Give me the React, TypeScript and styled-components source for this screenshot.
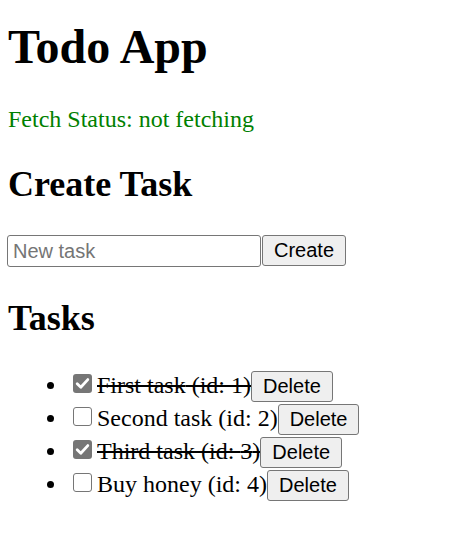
import React, { useState } from "react";
import styled, { createGlobalStyle } from "styled-components";

const GlobalStyle = createGlobalStyle`
  html, body {
    margin: 0;
    padding: 0;
    background: #ffffff;
  }
  body {
    font-family: "Liberation Serif", "Times New Roman", serif;
    font-size: 24px;
    color: #000000;
  }
`;

const Page = styled.div`
  padding: 0 8px;
`;

const Title = styled.h1`
  font-size: 48px;
  font-weight: bold;
  margin: 19px 0 32px;
  line-height: normal;
`;

const Status = styled.p<{ $fetching: boolean }>`
  margin: 24px 0;
  font-size: 24px;
  color: ${(p) => (p.$fetching ? "#b8860b" : "#008000")};
`;

const SectionTitle = styled.h2`
  font-size: 36px;
  font-weight: bold;
  margin: 30px 0;
  line-height: normal;
`;

const CreateForm = styled.form`
  display: flex;
  align-items: flex-start;
  gap: 1px;
  margin: 0 0 0 -1px;
`;

const TaskInput = styled.input`
  box-sizing: border-box;
  width: 254px;
  height: 32px;
  margin: 0;
  padding: 0 5px;
  border: 1px solid #767676;
  border-radius: 3px;
  font-family: "Liberation Sans", Arial, sans-serif;
  font-size: 20px;
  color: #000000;
  background: #ffffff;
  outline: none;

  &::placeholder {
    color: #757575;
  }
`;

const Button = styled.button`
  box-sizing: border-box;
  height: 31px;
  margin: 0;
  padding: 0 11px;
  border: 1px solid #767676;
  border-radius: 3px;
  background: #efefef;
  font-family: "Liberation Sans", Arial, sans-serif;
  font-size: 20px;
  line-height: normal;
  color: #000000;
  cursor: pointer;
  vertical-align: baseline;

  &:hover {
    background: #e5e5e5;
  }
`;

const TaskList = styled.ul`
  margin: 30px 0 24px;
  padding-left: 60px;
  list-style: disc;
`;

const TaskItem = styled.li`
  line-height: 32.3px;
`;

const CheckBox = styled.span<{ $checked: boolean }>`
  box-sizing: border-box;
  display: inline-block;
  width: 19px;
  height: 19px;
  margin: 0 5px 0 5px;
  border-radius: 3px;
  border: ${(p) => (p.$checked ? "none" : "1.5px solid #767676")};
  background: ${(p) => (p.$checked ? "#767676" : "#ffffff")};
  vertical-align: baseline;
  position: relative;
  cursor: pointer;

  svg {
    position: absolute;
    left: 0;
    top: 0;
    display: block;
  }
`;

const TaskText = styled.span<{ $done: boolean }>`
  text-decoration: ${(p) => (p.$done ? "line-through" : "none")};
`;

type Task = { id: number; title: string; completed: boolean };

const initialTasks: Task[] = [
  { id: 1, title: "First task", completed: true },
  { id: 2, title: "Second task", completed: false },
  { id: 3, title: "Third task", completed: true },
  { id: 4, title: "Buy honey", completed: false },
];

export default function App() {
  const [tasks, setTasks] = useState<Task[]>(initialTasks);
  const [draft, setDraft] = useState("");

  const toggle = (id: number) =>
    setTasks((ts) => ts.map((t) => (t.id === id ? { ...t, completed: !t.completed } : t)));
  const remove = (id: number) => setTasks((ts) => ts.filter((t) => t.id !== id));
  const create = (e: React.FormEvent) => {
    e.preventDefault();
    if (!draft.trim()) return;
    const id = tasks.reduce((m, t) => Math.max(m, t.id), 0) + 1;
    setTasks((ts) => [...ts, { id, title: draft.trim(), completed: false }]);
    setDraft("");
  };

  return (
    <Page>
      <GlobalStyle />
      <Title>Todo App</Title>
      <Status $fetching={false}>Fetch Status: not fetching</Status>
      <SectionTitle>Create Task</SectionTitle>
      <CreateForm onSubmit={create}>
        <TaskInput
          placeholder="New task"
          value={draft}
          onChange={(e) => setDraft(e.target.value)}
        />
        <Button type="submit">Create</Button>
      </CreateForm>
      <SectionTitle>Tasks</SectionTitle>
      <TaskList>
        {tasks.map((t) => (
          <TaskItem key={t.id}>
            <CheckBox
              role="checkbox"
              aria-checked={t.completed}
              $checked={t.completed}
              onClick={() => toggle(t.id)}
            >
              {t.completed && (
                <svg width="19" height="19" viewBox="0 0 19 19">
                  <path
                    d="M4.2 9.8 L7.8 13.3 L14.8 5.6"
                    fill="none"
                    stroke="#ffffff"
                    strokeWidth="2.8"
                    strokeLinecap="round"
                    strokeLinejoin="round"
                  />
                </svg>
              )}
            </CheckBox>
            <TaskText $done={t.completed}>
              {t.title} (id: {t.id})
            </TaskText>
            <Button type="button" onClick={() => remove(t.id)}>
              Delete
            </Button>
          </TaskItem>
        ))}
      </TaskList>
    </Page>
  );
}
